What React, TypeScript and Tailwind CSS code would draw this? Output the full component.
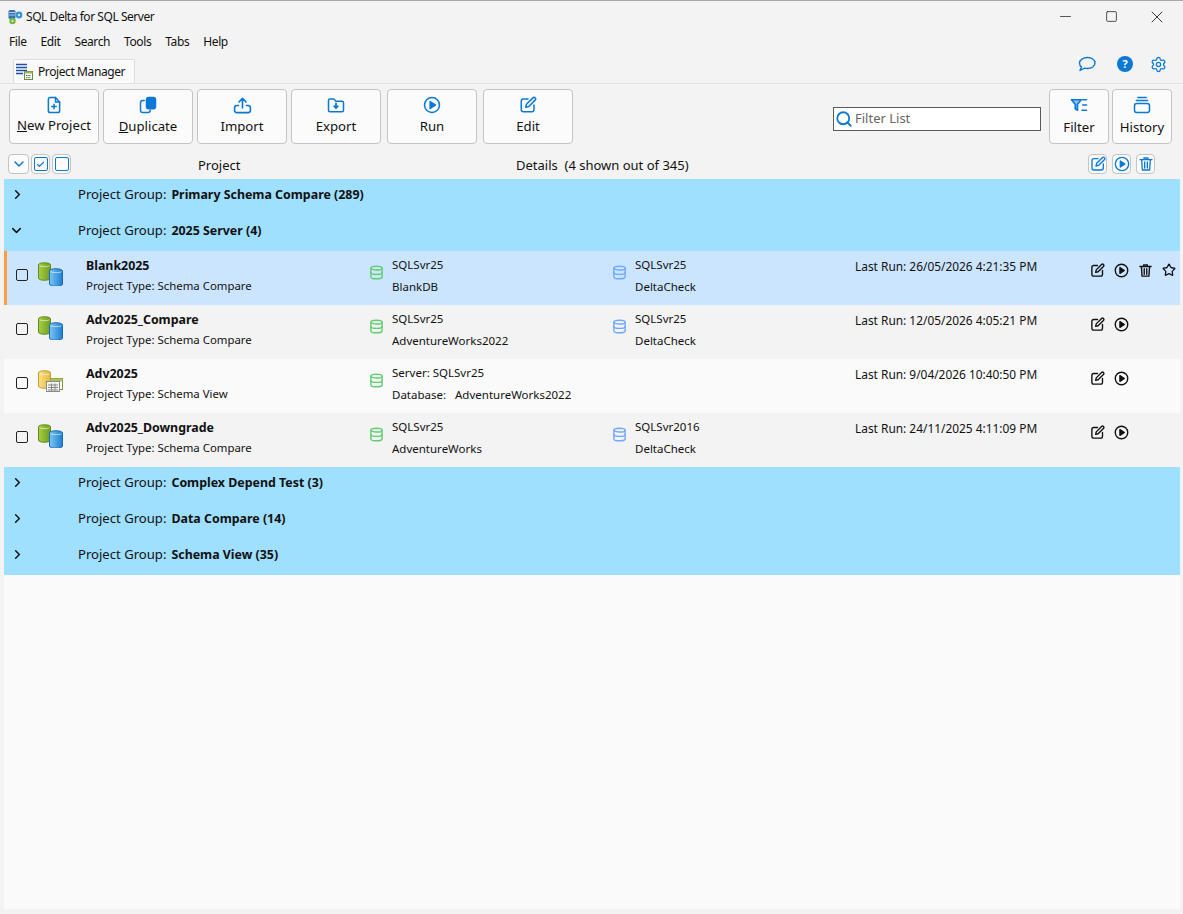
import React from "react";
import { Minus, Square, X, ChevronRight, ChevronDown, Check, Settings, Search, Star, Database } from "lucide-react";

const B = "#0a78d7";

function Svg({ size = 20, color = B, sw = 2, children }: { size?: number; color?: string; sw?: number; children: React.ReactNode }) {
  return (
    <svg width={size} height={size} viewBox="0 0 24 24" fill="none" stroke={color} strokeWidth={sw} strokeLinecap="round" strokeLinejoin="round">
      {children}
    </svg>
  );
}
const EditI = (p: { size?: number; color?: string; sw?: number }) => (
  <Svg {...p}>
    <path d="M12 4H6a3 3 0 0 0-3 3v11a3 3 0 0 0 3 3h11a3 3 0 0 0 3-3v-6" />
    <path d="M18.5 2.5a2.1 2.1 0 0 1 3 3L13 14l-4 1 1-4z" />
  </Svg>
);
const PlayI = (p: { size?: number; color?: string; sw?: number }) => (
  <Svg {...p}>
    <circle cx="12" cy="12" r="10" />
    <path d="M9.5 7.5v9l7-4.5z" fill={p.color ?? B} />
  </Svg>
);
const TrashI = (p: { size?: number; color?: string; sw?: number }) => (
  <Svg {...p}>
    <path d="M3 5.5h18M9 5V3h6v2M5.5 6l1 15h11l1-15" />
    <path d="M10 9v9M14 9v9" />
  </Svg>
);
const NewI = () => (
  <Svg size={18}>
    <path d="M14 2H7a2.5 2.5 0 0 0-2.5 2.5v15A2.5 2.5 0 0 0 7 22h10a2.5 2.5 0 0 0 2.5-2.5V8z" />
    <path d="M14 2v6h5.5M12 11v6M9 14h6" />
  </Svg>
);
const DupI = () => (
  <svg width="18" height="18" viewBox="0 0 24 24">
    <rect x="9" y="1" width="14" height="17" rx="4" fill={B} />
    <path d="M7 6H5a3 3 0 0 0-3 3v10a3 3 0 0 0 3 3h7a3 3 0 0 0 3-3v-0" fill="none" stroke={B} strokeWidth="2" strokeLinecap="round" />
  </svg>
);
const ImportI = () => (
  <Svg size={19}>
    <path d="M12 15V3M7.5 7.5 12 3l4.5 4.5" />
    <path d="M7 12H5a3 3 0 0 0-3 3v3a3 3 0 0 0 3 3h14a3 3 0 0 0 3-3v-3a3 3 0 0 0-3-3h-2" />
  </Svg>
);
const ExportI = () => (
  <Svg size={18}>
    <path d="M2 6a2 2 0 0 1 2-2h5l3 3h8a2 2 0 0 1 2 2v10a2 2 0 0 1-2 2H4a2 2 0 0 1-2-2z" />
    <path d="M12 10v6M9.5 13.5 12 16l2.5-2.5" strokeWidth="2.4" />
  </Svg>
);
const FilterI = () => (
  <svg width="18" height="18" viewBox="0 0 24 24" fill="none" stroke={B} strokeWidth="2.2" strokeLinecap="round" strokeLinejoin="round">
    <path d="M2 5h13l-5 6v8l-3-2v-6z" fill="#8cc4f0" />
    <path d="M17 5h5M17 12h5M16 19h6" />
  </svg>
);
const HistoryI = () => (
  <svg width="18" height="18" viewBox="0 0 24 24" fill="none" stroke={B} strokeWidth="2" strokeLinecap="round">
    <path d="M6.5 2h11M4.5 6h15" />
    <rect x="2" y="10" width="20" height="12" rx="3" />
  </svg>
);
const BubbleI = () => (
  <svg width="18" height="16" viewBox="0 0 18 16" fill="none" stroke={B} strokeWidth="1.4" strokeLinejoin="round">
    <path d="M9.5 1.5c4 0 7.5 2.3 7.5 5.5s-3.500 5.500-7.500 5.500c-1 0-2-.1-2.800-.4L2 14.500l1.500-3.400C2.200 10 1.500 8.600 1.500 7c0-3.200 4-5.500 8-5.500z" />
  </svg>
);

function Cyl({ x, y, w, h, c1, c2, c3, id }: { x: number; y: number; w: number; h: number; c1: string; c2: string; c3: string; id: string }) {
  return (
    <g>
      <defs>
        <linearGradient id={id} x1="0" x2="1" y1="0" y2="0">
          <stop offset="0" stopColor={c1} />
          <stop offset="1" stopColor={c2} />
        </linearGradient>
      </defs>
      <path d={`M${x} ${y + 2}c0-3 ${w}-3 ${w} 0v${h}c0 3-${w} 3-${w} 0z`} fill={`url(#${id})`} stroke={c3} strokeWidth="1" />
      <path d={`M${x + 1} ${y + 2.5}c1 1.5 ${w - 2} 1.5 ${w - 2} 0`} fill="none" stroke="#ffffff" strokeOpacity="0.6" />
    </g>
  );
}
function CompareIcon({ id }: { id: string }) {
  return (
    <svg width="26" height="24" viewBox="0 0 26 24">
      <Cyl id={id + "a"} x={0.5} y={1} w={12} h={13} c1="#a8cf45" c2="#6f9d1e" c3="#5f8a1c" />
      <Cyl id={id + "b"} x={11.5} y={7} w={13} h={13} c1="#7cc4f5" c2="#1f7fd0" c3="#1a6ab2" />
    </svg>
  );
}
function ViewIcon() {
  return (
    <svg width="26" height="24" viewBox="0 0 26 24">
      <Cyl id="vw" x={0.5} y={1} w={12} h={13} c1="#fbe28a" c2="#e6b53a" c3="#c79a2c" />
      <rect x="12.500" y="8.500" width="12" height="11" fill="#ffffff" stroke="#7a9a3a" />
      <rect x="12.500" y="8.500" width="12" height="3" fill="#a5c25a" />
      <rect x="8.500" y="11.500" width="13" height="10" fill="#f4f4f4" stroke="#8a8a8a" />
      <path d="M10 15h10M10 17.500h10M10 20h10M13.500 13.500v7M17 13.500v7" stroke="#888888" strokeWidth="1" />
    </svg>
  );
}
function ManagerIcon() {
  return (
    <svg width="17" height="17" viewBox="0 0 17 17">
      <path d="M0 1.500h11M0 4.500h11M0 7.500h11M0 10.500h7" stroke="#1f4fa8" strokeWidth="1.6" />
      <rect x="8.500" y="8.500" width="8" height="8" fill="#fff" stroke="#6c8a38" />
      <rect x="8.500" y="8.500" width="8" height="2" fill="#9ab84e" />
      <path d="M10 12.500h5M10 14.700h5" stroke="#555" strokeWidth="1" strokeDasharray="1.500 .8" />
    </svg>
  );
}
function AppIcon() {
  return (
    <svg width="15" height="16" viewBox="0 0 15 16">
      <rect x="0.500" y="1" width="7" height="9" rx="1.500" fill="#3b6fb5" />
      <path d="M1 3.500h6M1 6h6" stroke="#cfe0f5" strokeWidth="0.8" />
      <circle cx="11" cy="6" r="3.400" fill="#2f95d8" />
      <circle cx="11" cy="6" r="1.200" fill="#d8eefc" />
      <circle cx="4.500" cy="12" r="3.200" fill="#72b83e" />
      <circle cx="4.500" cy="12" r="1.100" fill="#e4f4d6" />
    </svg>
  );
}

function ToolBtn({ icon, label, w = "w-[90px]", cls = "", lb = "mt-[2px]" }: { icon: React.ReactNode; label: React.ReactNode; w?: string; cls?: string; lb?: string }) {
  return (
    <div className={`${w} ${cls} h-[55px] shrink-0 flex flex-col items-center bg-[#fbfbfb] border border-[#c4c4c4] rounded-[4px] pt-[5px]`}>
      <div className="h-[20px] flex items-center justify-center">{icon}</div>
      <div className={`text-[13.2px] leading-[18px] ${lb} text-[#111]`}>{label}</div>
    </div>
  );
}
function MiniBtn({ children, w = "w-[19px]" }: { children: React.ReactNode; w?: string }) {
  return <div className={`${w} h-[20px] flex items-center justify-center bg-[#fbfbfb] border border-[#c4c4c4] rounded-[4px]`}>{children}</div>;
}

function GroupRow({ name, open }: { name: string; open?: boolean }) {
  return (
    <div className="h-[36px] flex items-center bg-[#9fdfff] text-[13.1px] text-[#111] pb-[5px]">
      <div className="w-[25px] pl-[5px] shrink-0 flex">
        {open ? <ChevronDown size={15} strokeWidth={2.4} color="#111" /> : <ChevronRight size={15} strokeWidth={2.4} color="#111" className="ml-[1px]" />}
      </div>
      <span className="ml-[49px]">Project Group:</span>
      <span className="ml-[5px] mt-[1px] font-bold text-[12.4px]">{name}</span>
    </div>
  );
}

type Item = { name: string; type: string; s1: string; s2: string; d1?: string; d2?: string; run: string; icon: React.ReactNode; bg: string; sel?: boolean };

const items: Item[] = [
  { name: "Blank2025", type: "Schema Compare", s1: "SQLSvr25", s2: "BlankDB", d1: "SQLSvr25", d2: "DeltaCheck", run: "26/05/2026 4:21:35 PM", icon: <CompareIcon id="c1" />, bg: "bg-[#cce5ff]", sel: true },
  { name: "Adv2025_Compare", type: "Schema Compare", s1: "SQLSvr25", s2: "AdventureWorks2022", d1: "SQLSvr25", d2: "DeltaCheck", run: "12/05/2026 4:05:21 PM", icon: <CompareIcon id="c2" />, bg: "bg-[#f3f3f3]" },
  { name: "Adv2025", type: "Schema View", s1: "Server: SQLSvr25", s2: "Database:   AdventureWorks2022", run: "9/04/2026 10:40:50 PM", icon: <ViewIcon />, bg: "bg-[#fafafa]" },
  { name: "Adv2025_Downgrade", type: "Schema Compare", s1: "SQLSvr25", s2: "AdventureWorks", d1: "SQLSvr2016", d2: "DeltaCheck", run: "24/11/2025 4:11:09 PM", icon: <CompareIcon id="c3" />, bg: "bg-[#f3f3f3]" },
];

function ItemRow({ it }: { it: Item }) {
  return (
    <div className={`h-[54px] flex ${it.bg} text-[#111] ${it.sel ? "border-l-[3px] border-[#ff9f3d]" : "border-l-[3px] border-transparent"}`}>
      <div className="w-[31px] shrink-0 pl-[10px] pt-[18px]">
        <div className="w-[12px] h-[12px] border-[1.5px] border-[#222] rounded-[2px] bg-transparent -ml-[1px]" />
      </div>
      <div className="w-[48px] shrink-0 pt-[11px]">{it.icon}</div>
      <div className="w-[284px] shrink-0">
        <div className="text-[12.4px] font-bold leading-[18px] mt-[6px]">{it.name}</div>
        <div className="text-[11.4px] leading-[16px] mt-[3px]">Project Type: {it.type}</div>
      </div>
      <div className="w-[22px] shrink-0 pt-[14px] -ml-[1px] mr-[1px]"><Database size={15} color="#5fcf70" strokeWidth={2.2} /></div>
      <div className="w-[221px] shrink-0 text-[11.5px] whitespace-pre">
        <div className="leading-[16px] mt-[6px]">{it.s1}</div>
        <div className="leading-[16px] mt-[6px]">{it.s2}</div>
      </div>
      <div className="w-[22px] shrink-0 pt-[14px] -ml-[1px] mr-[1px]">{it.d1 && <Database size={15} color="#6fa8ff" strokeWidth={2.2} />}</div>
      <div className="w-[220px] shrink-0 text-[11.5px]">
        <div className="leading-[16px] mt-[6px]">{it.d1}</div>
        <div className="leading-[16px] mt-[6px]">{it.d2}</div>
      </div>
      <div className="w-[235px] shrink-0 text-[11.9px] leading-[16px] pt-[7px]">Last Run: {it.run}</div>
      <div className="flex items-start gap-[9px] pt-[12px]">
        <EditI size={15} color="#111" sw={2.2} />
        <PlayI size={15} color="#111" sw={2.2} />
        {it.sel && <TrashI size={15} color="#111" sw={2.2} />}
        {it.sel && <Star size={14} color="#111" strokeWidth={2.2} />}
      </div>
    </div>
  );
}

export default function App() {
  return (
    <div className="w-[1183px] h-[914px] bg-[#f3f3f3] flex flex-col overflow-hidden border-t border-[#a9a9a9] text-[#111]" style={{ fontFamily: '"Noto Sans", "Open Sans", sans-serif' }}>
      <div className="h-[31px] shrink-0 flex items-center">
        <div className="ml-[8px]"><AppIcon /></div>
        <span className="ml-[3px] text-[12px] tracking-[-0.45px]">SQL Delta for SQL Server</span>
        <div className="ml-auto flex items-center">
          <div className="w-[46px] flex justify-center"><Minus size={17} strokeWidth={1} /></div>
          <div className="w-[46px] flex justify-center"><Square size={13} strokeWidth={1.3} /></div>
          <div className="w-[46px] flex justify-center"><X size={20} strokeWidth={1} /></div>
          <div className="w-[3px]" />
        </div>
      </div>
      <div className="h-[20px] shrink-0 flex items-center gap-[14px] pl-[9px] text-[12px] tracking-[-0.4px]">
        <span>File</span><span>Edit</span><span>Search</span><span>Tools</span><span>Tabs</span><span>Help</span>
      </div>
      <div className="h-[32px] shrink-0 flex items-end border-b border-[#e2e2e2] relative">
        <div className="ml-[13px] h-[24px] w-[122px] bg-[#fafafa] border border-b-0 border-[#dddddd] rounded-t-[2px] flex items-center pl-[2px]">
          <ManagerIcon />
          <span className="ml-[5px] text-[12px] tracking-[-0.4px]">Project Manager</span>
        </div>
        <div className="ml-auto flex items-center gap-[14px] pr-[16px] pb-[10px]">
          <div className="mr-[6px] flex"><BubbleI /></div>
          <svg width="18" height="18" viewBox="0 0 18 18"><circle cx="9" cy="9" r="8" fill={B} /><text x="9" y="13" textAnchor="middle" fontSize="11" fontWeight="700" fill="#fff" fontFamily="Noto Sans">?</text></svg>
          <Settings size={17} color={B} strokeWidth={1.8} className="ml-[2px]" />
        </div>
      </div>
      <div className="h-[61px] shrink-0 flex items-start pt-[5px] pl-[9px]">
        <ToolBtn icon={<NewI />} label={<span><u>N</u>ew Project</span>} lb="mt-[1px]" />
        <ToolBtn icon={<DupI />} label={<span><u>D</u>uplicate</span>} cls="ml-[4px]" />
        <ToolBtn icon={<ImportI />} label="Import" cls="ml-[4px]" />
        <ToolBtn icon={<ExportI />} label="Export" cls="ml-[4px]" />
        <ToolBtn icon={<PlayI size={18} />} label="Run" cls="ml-[6px]" />
        <ToolBtn icon={<EditI size={18} />} label="Edit" cls="ml-[6px]" />
        <div className="ml-[260px] mt-[18px] w-[208px] h-[24px] bg-white border border-[#5a5a5a] flex items-center pl-[1px]">
          <Search size={18} color={B} strokeWidth={2.4} />
          <span className="ml-[2px] text-[13px] text-[#666]">Filter List</span>
        </div>
        <ToolBtn icon={<FilterI />} label="Filter" w="w-[60px]" cls="ml-[8px]" lb="mt-[3px]" />
        <ToolBtn icon={<HistoryI />} label="History" w="w-[60px]" cls="ml-[3px]" lb="mt-[3px]" />
      </div>
      <div className="h-[34px] shrink-0 flex items-start pl-[8px] pt-[9px] text-[13px] leading-[20px]">
        <MiniBtn w="w-[21px]"><ChevronDown size={16} color={B} strokeWidth={2.2} /></MiniBtn>
        <div className="ml-[2px]"><MiniBtn><div className="w-[14px] h-[14px] border-[1.5px] border-[#0a78d7] rounded-[2px] flex items-center justify-center"><Check size={9} color={B} strokeWidth={3} /></div></MiniBtn></div>
        <div className="ml-[2px]"><MiniBtn><div className="w-[14px] h-[14px] border-[1.5px] border-[#0a78d7] rounded-[2px]" /></MiniBtn></div>
        <span className="ml-[127px] w-[318px] shrink-0 mt-[1px]">Project</span>
        <span className="whitespace-pre mt-[1px]">Details  (4 shown out of 345)</span>
        <div className="ml-auto flex gap-[5px] pr-[28px]">
          <MiniBtn><EditI size={16} /></MiniBtn>
          <MiniBtn><PlayI size={16} /></MiniBtn>
          <MiniBtn><TrashI size={16} /></MiniBtn>
        </div>
      </div>
      <div className="flex-1 ml-[4px] mr-[3px] flex flex-col bg-[#fafafa] mb-[5px]">
        <GroupRow name="Primary Schema Compare (289)" />
        <GroupRow name="2025 Server (4)" open />
        {items.map((it) => <ItemRow key={it.name} it={it} />)}
        <GroupRow name="Complex Depend Test (3)" />
        <GroupRow name="Data Compare (14)" />
        <GroupRow name="Schema View (35)" />
      </div>
    </div>
  );
}
